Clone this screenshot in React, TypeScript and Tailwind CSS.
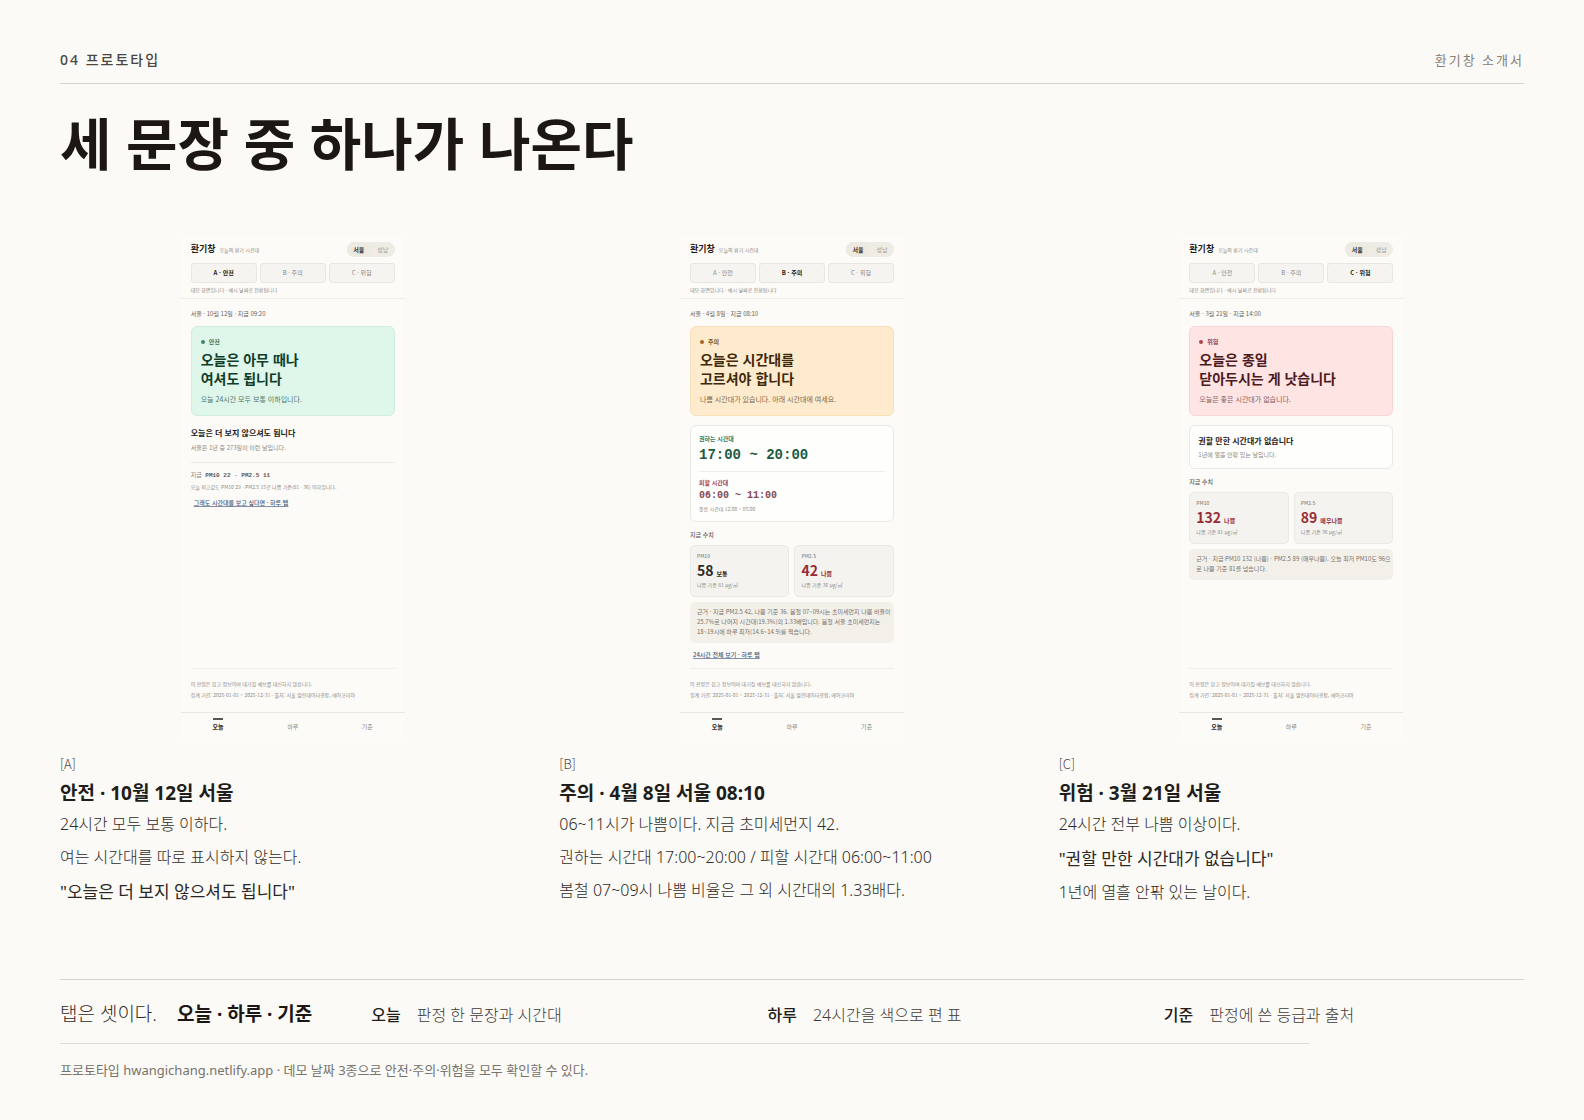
import type { ReactNode } from "react";

type Tone = "safe" | "caution" | "danger";

const tones: Record<Tone, { card: string; dot: string; label: string; title: string; text: string }> = {
  safe: {
    card: "bg-[#dff6ea] border-[#cfeedf]",
    dot: "bg-[#3f8568]",
    label: "text-[#3d7660]",
    title: "text-[#0f3d2b]",
    text: "text-[#55776a]",
  },
  caution: {
    card: "bg-[#feebcd] border-[#f9dfba]",
    dot: "bg-[#a8661a]",
    label: "text-[#80551f]",
    title: "text-[#40290b]",
    text: "text-[#7d674b]",
  },
  danger: {
    card: "bg-[#fee4e2] border-[#f8d6d4]",
    dot: "bg-[#a8474d]",
    label: "text-[#94434a]",
    title: "text-[#4c1a1e]",
    text: "text-[#85605f]",
  },
};

const scenarios = ["A · 안전", "B · 주의", "C · 위험"];

interface PhoneProps {
  active: number;
  tone: Tone;
  status: string;
  label: string;
  title: [string, string];
  summary: string;
  children: ReactNode;
}

function Phone({ active, tone, status, label, title, summary, children }: PhoneProps) {
  const t = tones[tone];
  return (
    <div className="mx-auto flex min-h-[506px] w-[224px] flex-col bg-[#fcfbf8] font-['Noto_Sans_CJK_KR',sans-serif] text-[5px] leading-[8px] text-[#8d8984]">
      <header className="border-b border-[#efede9] px-[10px] pt-[6px] pb-1">
        <div className="flex h-[15px] items-center justify-between">
          <p className="flex items-baseline gap-1">
            <strong className="text-[9px] font-bold text-[#1f1b18]">환기창</strong>
            <span>오늘의 환기 시간대</span>
          </p>
          <div className="flex h-[15px] w-12 rounded-full bg-[#efece5]">
            <button type="button" className="flex-1 rounded-full bg-[#edeae2] text-[6px] font-bold text-[#3a3632]">서울</button>
            <button type="button" className="flex-1 text-[6px] text-[#a5a19a]">성남</button>
          </div>
        </div>
        <div className="mt-[6px] grid grid-cols-3 gap-[3px]">
          {scenarios.map((name, i) => (
            <button
              key={name}
              type="button"
              className={
                i === active
                  ? "h-5 rounded-[3px] border border-[#e9e7e3] bg-[#f5f4f1] text-[6px] font-bold text-[#1f1b18]"
                  : "h-5 rounded-[3px] border border-[#e9e7e3] bg-[#f5f4f1] text-[6px] text-[#8d8984]"
              }
            >
              {name}
            </button>
          ))}
        </div>
        <p className="mt-[3px]">데모 화면입니다 · 예시 날짜로 전환됩니다</p>
      </header>

      <main className="flex-1 px-[10px] pt-[11px]">
        <p className="text-[6px] text-[#66625d]">{status}</p>
        <section className={`mt-2 rounded-md border px-[9px] pt-[11px] pb-[11px] ${t.card}`}>
          <p className={`flex items-center gap-1 text-[6px] font-bold ${t.label}`}>
            <span className={`size-1 rounded-full ${t.dot}`} />
            {label}
          </p>
          <h3 className={`mt-1 text-[14px] leading-[19px] font-bold ${t.title}`}>
            {title[0]}
            <br />
            {title[1]}
          </h3>
          <p className={`mt-[6px] text-[7px] leading-[10px] ${t.text}`}>{summary}</p>
        </section>
        {children}
      </main>

      <footer className="mx-[10px] border-t border-[#efede9] pt-[9px] pb-3 leading-[11px]">
        <p>이 판정은 참고 정보이며 대기질 예보를 대신하지 않습니다.</p>
        <p>집계 기간: 2025-01-01 ~ 2025-12-31 · 출처: 서울 열린데이터광장, 에어코리아</p>
      </footer>
      <nav className="grid grid-cols-3 border-t border-[#ebe9e5] pt-[5px] pb-[11px] text-[6px]">
        <button type="button" className="flex flex-col items-center gap-[3px] font-bold text-[#2b2724]">
          <span className="h-[2px] w-[10px] bg-[#5a5652]" />
          오늘
        </button>
        <button type="button" className="pt-[5px]">하루</button>
        <button type="button" className="pt-[5px]">기준</button>
      </nav>
    </div>
  );
}

interface Reading {
  name: string;
  value: number;
  grade: string;
  base: string;
  bad: boolean;
}

function Readings({ items }: { items: Reading[] }) {
  return (
    <section>
      <h4 className="mt-[9px] text-[6px] font-medium text-[#5c5853]">지금 수치</h4>
      <div className="mt-[6px] grid grid-cols-2 gap-[5px]">
        {items.map((r) => (
          <div key={r.name} className="rounded-[5px] border border-[#ebe9e5] bg-[#f4f3f0] px-[6px] pt-[6px] pb-[7px]">
            <p className="text-[5px] font-medium">{r.name}</p>
            <p className={`mt-[3px] flex h-[14px] items-baseline gap-[3px] font-bold ${r.bad ? "text-[#9b2c35]" : "text-[#2b2724]"}`}>
              <span className="text-[14px] leading-[14px]">{r.value}</span>
              <span className="text-[6px]">{r.grade}</span>
            </p>
            <p className="mt-1">{r.base}</p>
          </div>
        ))}
      </div>
    </section>
  );
}

function Basis({ children }: { children: ReactNode }) {
  return (
    <p className="mt-[5px] rounded-[5px] bg-[#f3f0ea] pt-[5px] pb-[6px] pl-[7px] text-[6px] leading-[10px] whitespace-nowrap text-[#77726b]">
      {children}
    </p>
  );
}

function DayLink({ children }: { children: ReactNode }) {
  return (
    <p className="mt-[7px] pl-[3px] text-[6px] leading-[9px]">
      <a href="#day" className="font-medium text-[#45597a] underline decoration-[#8290a6] underline-offset-1">{children}</a>
    </p>
  );
}

interface CaptionProps {
  code: string;
  title: string;
  lines: { text: string; quote?: boolean }[];
}

function Caption({ code, title, lines }: CaptionProps) {
  return (
    <div className="mt-[14px]">
      <p className="font-['Noto_Sans_CJK_KR',sans-serif] text-[13px] leading-4 font-light text-[#4a4642]">{code}</p>
      <h2 className="mt-[6px] text-[19px] leading-[30px] font-bold text-[#211d1a]">{title}</h2>
      {lines.map((l) => (
        <p
          key={l.text}
          className={
            l.quote
              ? "text-[17px] leading-[35px] text-[#2b2724]"
              : "text-[16px] leading-[33px] font-light text-[#2f2b28]"
          }
        >
          {l.text}
        </p>
      ))}
    </div>
  );
}

const tabs = [
  { name: "오늘", text: "판정 한 문장과 시간대" },
  { name: "하루", text: "24시간을 색으로 편 표" },
  { name: "기준", text: "판정에 쓴 등급과 출처" },
];

export default function App() {
  return (
    <div
      lang="ko"
      className="min-h-screen bg-[#fbfaf6] px-[60px] pt-[50px] pb-10 font-['Noto_Sans','Noto_Sans_CJK_KR',sans-serif] text-[#1c1714]"
    >
      <header className="flex items-baseline justify-between border-b border-[#d8d6d1] pb-[13px] leading-5 tracking-[2px]">
        <p className="text-[14px] font-medium text-[#4a4642]">04 프로토타입</p>
        <p className="text-[13px] text-[#85817b]">환기창 소개서</p>
      </header>
      <h1 className="mt-[25px] text-[56px] leading-[68px] font-bold">세 문장 중 하나가 나온다</h1>

      <div className="mt-[59px] grid grid-cols-3 gap-[34px]">
        <article>
          <Phone
            active={0}
            tone="safe"
            status="서울 · 10월 12일 · 지금 09:20"
            label="안전"
            title={["오늘은 아무 때나", "여셔도 됩니다"]}
            summary="오늘 24시간 모두 보통 이하입니다."
          >
            <h4 className="mt-[11px] text-[8px] leading-3 font-bold text-[#1f1b18]">오늘은 더 보지 않으셔도 됩니다</h4>
            <p className="mt-[5px] text-[6px]">서울은 1년 중 273일이 이런 날입니다.</p>
            <div className="mt-[10px] border-t border-[#ebe9e5] pt-2">
              <p className="font-['Liberation_Mono','Noto_Sans_CJK_KR',monospace] text-[6px] leading-[9px]">
                지금 <span className="font-bold text-[#5c5853]">PM10 22 · PM2.5 11</span>
              </p>
              <p className="mt-[3px] whitespace-nowrap">오늘 최고값도 PM10 29 · PM2.5 15로 나쁨 기준(81 · 36) 이하입니다.</p>
            </div>
            <DayLink>그래도 시간대를 보고 싶다면 · 하루 탭</DayLink>
          </Phone>
          <Caption
            code="[A]"
            title="안전 · 10월 12일 서울"
            lines={[
              { text: "24시간 모두 보통 이하다." },
              { text: "여는 시간대를 따로 표시하지 않는다." },
              { text: '"오늘은 더 보지 않으셔도 됩니다"', quote: true },
            ]}
          />
        </article>

        <article>
          <Phone
            active={1}
            tone="caution"
            status="서울 · 4월 8일 · 지금 08:10"
            label="주의"
            title={["오늘은 시간대를", "고르셔야 합니다"]}
            summary="나쁨 시간대가 있습니다. 아래 시간대에 여세요."
          >
            <section className="mt-[9px] rounded-md border border-[#ebe9e5] bg-[#fefefd] px-2 pt-[9px] pb-2">
              <p className="text-[6px] font-bold text-[#2f7a5c]">권하는 시간대</p>
              <p className="mt-1 font-['Liberation_Mono',monospace] text-[14px] leading-4 font-bold text-[#1b5a41]">17:00 ~ 20:00</p>
              <div className="mt-2 border-t border-[#efede9] pt-[7px]">
                <p className="text-[6px] font-bold text-[#a8474d]">피할 시간대</p>
                <p className="mt-[3px] font-['Liberation_Mono',monospace] text-[10px] leading-3 font-bold text-[#8a474c]">06:00 ~ 11:00</p>
                <p className="mt-[3px]">좋음 시간대 12:00 ~ 05:00</p>
              </div>
            </section>
            <Readings
              items={[
                { name: "PM10", value: 58, grade: "보통", base: "나쁨 기준 81 µg/㎥", bad: false },
                { name: "PM2.5", value: 42, grade: "나쁨", base: "나쁨 기준 36 µg/㎥", bad: true },
              ]}
            />
            <Basis>
              근거 · 지금 PM2.5 42, 나쁨 기준 36. 봄철 07~09시는 초미세먼지 나쁨 비율이
              <br />
              25.7%로 나머지 시간대(19.3%)의 1.33배입니다. 봄철 서울 초미세먼지는
              <br />
              18~19시에 하루 최저(14.6~14.9)를 찍습니다.
            </Basis>
            <DayLink>24시간 전체 보기 · 하루 탭</DayLink>
          </Phone>
          <Caption
            code="[B]"
            title="주의 · 4월 8일 서울 08:10"
            lines={[
              { text: "06~11시가 나쁨이다. 지금 초미세먼지 42." },
              { text: "권하는 시간대 17:00~20:00 / 피할 시간대 06:00~11:00" },
              { text: "봄철 07~09시 나쁨 비율은 그 외 시간대의 1.33배다." },
            ]}
          />
        </article>

        <article>
          <Phone
            active={2}
            tone="danger"
            status="서울 · 3월 21일 · 지금 14:00"
            label="위험"
            title={["오늘은 종일", "닫아두시는 게 낫습니다"]}
            summary="오늘은 좋은 시간대가 없습니다."
          >
            <section className="mt-[9px] rounded-md border border-[#ebe9e5] bg-[#fefefd] px-2 py-[9px]">
              <h4 className="text-[8px] leading-3 font-bold text-[#1f1b18]">권할 만한 시간대가 없습니다</h4>
              <p className="mt-1 text-[6px]">1년에 열흘 안팎 있는 날입니다.</p>
            </section>
            <Readings
              items={[
                { name: "PM10", value: 132, grade: "나쁨", base: "나쁨 기준 81 µg/㎥", bad: true },
                { name: "PM2.5", value: 89, grade: "매우나쁨", base: "나쁨 기준 36 µg/㎥", bad: true },
              ]}
            />
            <Basis>
              근거 · 지금 PM10 132 (나쁨) · PM2.5 89 (매우나쁨). 오늘 최저 PM10도 96으
              <br />
              로 나쁨 기준 81을 넘습니다.
            </Basis>
          </Phone>
          <Caption
            code="[C]"
            title="위험 · 3월 21일 서울"
            lines={[
              { text: "24시간 전부 나쁨 이상이다." },
              { text: '"권할 만한 시간대가 없습니다"', quote: true },
              { text: "1년에 열흘 안팎 있는 날이다." },
            ]}
          />
        </article>
      </div>

      <section className="mt-[70px] flex items-baseline border-t border-[#d8d6d1] pt-5 leading-7">
        <p className="mr-[59px] flex items-baseline gap-5 text-[19px] whitespace-nowrap">
          <span className="font-light text-[#2f2b28]">탭은 셋이다.</span>
          <strong className="font-bold">오늘 · 하루 · 기준</strong>
        </p>
        <dl className="grid flex-1 grid-cols-3 gap-9 text-[16px]">
          {tabs.map((tab) => (
            <div key={tab.name} className="flex gap-4">
              <dt className="font-medium text-[#211d1a]">{tab.name}</dt>
              <dd className="font-light text-[#3f3b37]">{tab.text}</dd>
            </div>
          ))}
        </dl>
      </section>
      <footer className="mt-[14px] max-w-[1250px] border-t border-[#dedcd7] pt-4 text-[13px] leading-5 text-[#77736d]">
        프로토타입 hwangichang.netlify.app · 데모 날짜 3종으로 안전·주의·위험을 모두 확인할 수 있다.
      </footer>
    </div>
  );
}
